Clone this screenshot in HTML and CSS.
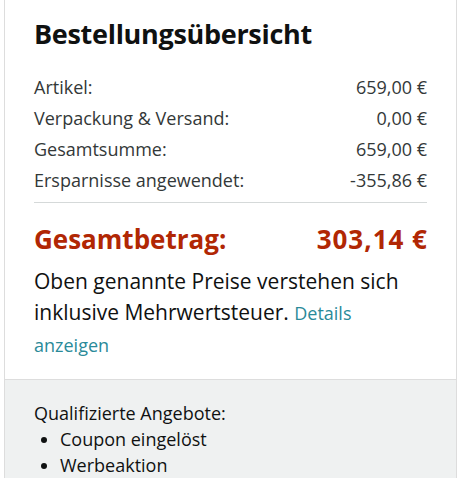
FILE: index.html
```html
<!DOCTYPE html>
<html lang="de">
<head>
<meta charset="utf-8">
<link rel="stylesheet" href="styles.css">
</head>
<body>
<div class="box">
  <div class="main">
    <h2 class="title">Bestellungsübersicht</h2>
    <div class="rows">
      <div class="row"><span>Artikel:</span><span>659,00 €</span></div>
      <div class="row"><span>Verpackung &amp; Versand:</span><span>0,00 €</span></div>
      <div class="row"><span>Gesamtsumme:</span><span>659,00 €</span></div>
      <div class="row"><span>Ersparnisse angewendet:</span><span>-355,86 €</span></div>
    </div>
    <hr class="divider">
    <div class="total"><span>Gesamtbetrag:</span><span class="amount">303,14 €</span></div>
    <p class="note">Oben genannte Preise verstehen sich inklusive Mehrwertsteuer. <a class="link" href="#">Details anzeigen</a></p>
  </div>
  <div class="offers">
    <div class="offers-title">Qualifizierte Angebote:</div>
    <ul class="offers-list">
      <li>Coupon eingelöst</li>
      <li>Werbeaktion</li>
    </ul>
  </div>
</div>
</body>
</html>
```
FILE: styles.css
```css
html, body {
  margin: 0;
  padding: 0;
  background: #ffffff;
}
body {
  font-family: "Open Sans", "Noto Sans", sans-serif;
  color: #0f1111;
  height: 478px;
  overflow: hidden;
}
.box {
  margin-left: 4px;
  width: 451px;
  border: 1px solid #dddddd;
  border-top: none;
  border-bottom: none;
  min-height: 478px;
  display: flex;
  flex-direction: column;
}
.main {
  padding: 17px 29px 18px 29px;
}
.title {
  margin: 0;
  font-size: 27px;
  font-weight: 700;
  line-height: 34px;
  letter-spacing: -0.3px;
  color: #0f1111;
}
.rows {
  margin-top: 21px;
  display: flex;
  flex-direction: column;
}
.row {
  display: flex;
  justify-content: space-between;
  font-size: 18px;
  line-height: 31px;
  color: #333838;
}
.divider {
  margin: 6px 0 0 0;
  border: none;
  border-top: 1px solid #d5d9d9;
  height: 0;
}
.total {
  display: flex;
  justify-content: space-between;
  margin-top: 20px;
  font-size: 26px;
  font-weight: 700;
  line-height: 32px;
  color: #b12704;
}
.amount {
  letter-spacing: 1px;
  margin-right: -1px;
}
.note {
  margin: 11px 0 0 0;
  font-size: 21px;
  line-height: 31px;
  color: #0f1111;
}
.link {
  color: #2a8a99;
  font-size: 18px;
  text-decoration: none;
}
.offers {
  flex: 1;
  background: #eff1f1;
  border-top: 1px solid #dddddd;
  padding: 20px 29px 0 29px;
}
.offers-title {
  font-size: 18px;
  line-height: 26px;
  color: #0f1111;
}
.offers-list {
  margin: 0;
  padding-left: 26px;
  font-size: 18px;
  line-height: 26px;
}
```
